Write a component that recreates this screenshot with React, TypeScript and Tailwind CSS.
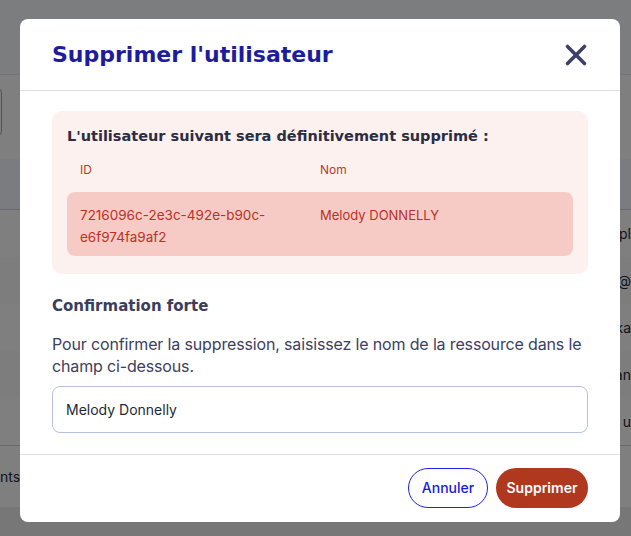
import { X } from 'lucide-react';

const rows = ['pl', 'y@', 'ka', 'an', 'u'];

const heading = { fontFamily: '"DejaVu Sans", Inter, sans-serif' };

function BackgroundPage() {
  return (
    <div className="flex flex-col h-[536px] bg-[#eeeeee] text-[#1f2937]" style={{ fontFamily: 'Inter, sans-serif' }}>
      <div className="h-[75px] bg-[#f8fafe] border-b border-[#e5e7eb]" />
      <div className="h-[84px] bg-white pt-3">
        <div className="h-[50px] w-[120px] -ml-[118px] rounded-md border border-[#9ca3af]" />
      </div>
      <div className="h-[51px] bg-[#f4f8ff] border-b border-[#d1d5db]" />
      {rows.map((r, i) => (
        <div
          key={i}
          className={`h-[47px] flex items-center justify-end text-sm ${i % 2 === 0 ? 'bg-white' : 'bg-[#fafafa]'}`}
        >
          <span>{r}</span>
        </div>
      ))}
      <div className="h-[62px] bg-white border-t border-[#d1d5db] flex items-center">
        <span className="text-sm">nts</span>
      </div>
      <div className="flex-1" />
    </div>
  );
}

export default function App() {
  return (
    <div className="relative h-[536px] w-full overflow-hidden">
      <BackgroundPage />
      <div className="absolute inset-0 bg-black/50 flex items-start pl-5 pt-[19px]">
        <div
          className="w-[600px] bg-white rounded-lg flex flex-col"
          style={{ fontFamily: 'Inter, "Open Sans", sans-serif' }}
        >
          <div className="h-[72px] flex items-center justify-between pl-8 pr-[27px] border-b border-[#dcdde8]">
            <h2 className="text-[22px] font-bold text-[#1d1d9c]" style={heading}>
              Supprimer l'utilisateur
            </h2>
            <button className="text-[#3c3f66] mt-[1px]">
              <X size={34} strokeWidth={2.5} />
            </button>
          </div>

          <div className="px-8 pt-5 pb-[21px]">
            <div className="bg-[#fdf1ef] rounded-[10px] px-[15px] pt-[15px] pb-[18px]">
              <p className="text-[14.5px] leading-5 font-bold text-[#2b2d42]" style={heading}>
                L'utilisateur suivant sera définitivement supprimé :
              </p>
              <div className="mt-[12px] h-6 flex items-center px-[13px] text-xs text-[#c0392b]">
                <span className="w-[240px]">ID</span>
                <span>Nom</span>
              </div>
              <div className="mt-[10px] bg-[#f6cac5] rounded-lg px-[13px] pt-3 pb-[8px] flex text-[13px] leading-[22px] text-[#b83226]">
                <span className="w-[240px] text-[13.5px]">
                  7216096c-2e3c-492e-b90c-
                  <br />
                  e6f974fa9af2
                </span>
                <span>Melody DONNELLY</span>
              </div>
            </div>

            <p className="mt-[22px] text-[15px] leading-5 font-bold text-[#3a3d5e]" style={heading}>
              Confirmation forte
            </p>
            <p className="mt-[17px] text-base leading-[22px] tracking-[-0.15px] text-[#3d405e]">
              Pour confirmer la suppression, saisissez le nom de la ressource dans le champ ci-dessous.
            </p>
            <input
              readOnly
              value="Melody Donnelly"
              className="mt-[9px] w-full h-[47px] rounded-lg border border-[#b8bfdf] px-[13px] text-sm text-[#1f2937] outline-none"
            />
          </div>

          <div className="border-t border-[#dcdde8] h-[68px] flex items-center justify-end gap-2 px-8 pb-[2px]">
            <button className="h-10 w-20 rounded-full border border-[#2020e8] text-sm font-medium text-[#1a1ae0]">
              Annuler
            </button>
            <button className="h-10 w-[92px] rounded-full bg-[#b0381f] text-sm font-semibold text-white">
              Supprimer
            </button>
          </div>
        </div>
      </div>
    </div>
  );
}
